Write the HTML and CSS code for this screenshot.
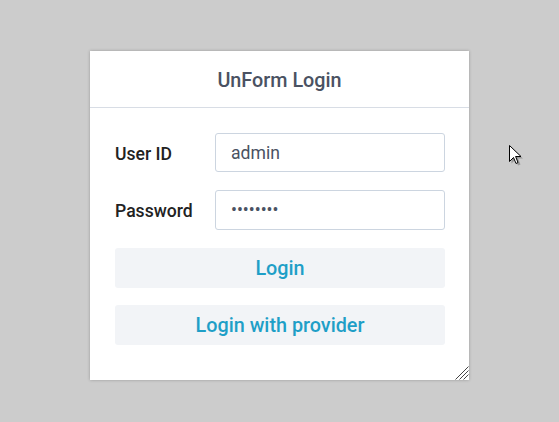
FILE: index.html
```html
<!DOCTYPE html>
<html>
<head>
<meta charset="utf-8">
<link rel="stylesheet" href="styles.css">
</head>
<body>
<div class="card">
  <div class="card-header">UnForm Login</div>
  <form class="card-body">
    <div class="row">
      <label class="label">User ID</label>
      <input class="input" type="text" value="admin">
    </div>
    <div class="row">
      <label class="label">Password</label>
      <input class="input" type="password" value="password">
    </div>
    <button type="button" class="btn">Login</button>
    <button type="button" class="btn">Login with provider</button>
  </form>
  <svg class="grip" width="15" height="15" viewBox="0 0 15 15">
    <path d="M14.5 1.5 L1.5 14.5 M14.5 5.5 L5.5 14.5 M14.5 9.5 L9.5 14.5" stroke="#444" stroke-width="1" fill="none"/>
  </svg>
</div>
<svg class="cursor" width="14" height="22" viewBox="0 0 14 22">
  <path d="M2.5 2.5 L2.5 18.5 L6.5 14.5 L9 20.5 L11.5 19.5 L9 13.5 L14 13.5 Z" fill="rgba(0,0,0,0.25)"/>
  <path d="M0.5 0.5 L0.5 16.5 L4.5 12.5 L7 18.5 L9 17.5 L6.6 11.5 L12 11.5 Z" fill="#fff" stroke="#000" stroke-width="1"/>
</svg>
</body>
</html>
```
FILE: styles.css
```css
html, body {
  margin: 0;
  padding: 0;
}
body {
  background: #cccccc;
  font-family: Roboto, "Liberation Sans", sans-serif;
  width: 559px;
  height: 422px;
  position: relative;
  overflow: hidden;
}
.card {
  position: relative;
  box-sizing: border-box;
  width: 379px;
  margin: 51px 0 0 90px;
  background: #fff;
  box-shadow: 0 0 3px rgba(0,0,0,0.25);
}
.card-header {
  box-sizing: border-box;
  height: 57px;
  padding-top: 2px;
  border-bottom: 1px solid #d8dde5;
  display: flex;
  align-items: center;
  justify-content: center;
  font-size: 19.8px;
  font-weight: 500;
  color: #4a5262;
}
.card-body {
  margin: 0;
  padding: 25px 24px 35px 25px;
  display: flex;
  flex-direction: column;
  gap: 18px;
}
.row {
  display: flex;
  align-items: center;
}
.label {
  width: 100px;
  padding-top: 2px;
  font-size: 17.6px;
  font-weight: 500;
  color: #222;
}
.input {
  box-sizing: border-box;
  width: 230px;
  height: 39px;
  border: 1px solid #ccd5e0;
  border-radius: 3px;
  padding: 0 15px;
  font-family: Roboto, "Liberation Sans", sans-serif;
  font-size: 17.6px;
  color: #4a5262;
  background: #fff;
  outline: none;
}
.row + .row .input {
  height: 40px;
}
.btn {
  height: 40px;
  border: none;
  border-radius: 3px;
  background: #f2f4f7;
  color: #1f9fc7;
  font-family: Roboto, "Liberation Sans", sans-serif;
  font-size: 19.8px;
  font-weight: 500;
  cursor: pointer;
}
.btn + .btn {
  margin-top: -1px;
}
.grip {
  position: absolute;
  right: 0;
  bottom: 0;
}
.cursor {
  position: absolute;
  left: 509px;
  top: 145px;
}
```
